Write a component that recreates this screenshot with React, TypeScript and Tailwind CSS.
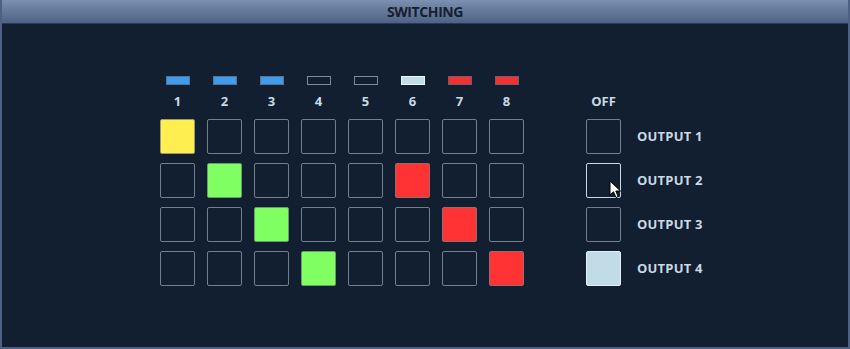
import React from "react"

type Bar = "blue" | "empty" | "light" | "red"

const bars: Bar[] = ["blue", "blue", "blue", "empty", "empty", "light", "red", "red"]

const colors: Record<number, string> = {
  0: "bg-[#ffee4f] border-[#9a9a70]",
  1: "bg-[#80ff62] border-[#6a9a70]",
  2: "bg-[#80ff62] border-[#6a9a70]",
  3: "bg-[#80ff62] border-[#6a9a70]",
  5: "bg-[#ff3333] border-[#9a6a70]",
  6: "bg-[#ff3333] border-[#9a6a70]",
  7: "bg-[#ff3333] border-[#9a6a70]",
}

// matrix[row][col] -> colour key of the lit crosspoint, null = unlit
const matrix: (number | null)[][] = [
  [0, null, null, null, null, null, null, null],
  [null, 1, null, null, null, 5, null, null],
  [null, null, 2, null, null, null, 6, null],
  [null, null, null, 3, null, null, null, 7],
]

function BarChip({ kind }: { kind: Bar }) {
  const cls =
    kind === "blue"
      ? "bg-[#3f9bec] border-[#5a7390]"
      : kind === "red"
      ? "bg-[#f23232] border-[#7a5a68]"
      : kind === "light"
      ? "bg-[#c2dde9] border-[#eef6fa]"
      : "bg-transparent border-[#7d8b99]"
  return <div className={`h-[9px] w-[24px] border ${cls}`} />
}

function Cell({ active }: { active: number | null }) {
  const cls = active !== null ? colors[active] : "border-[#737f8d]"
  return <div className={`h-[35px] w-[35px] rounded-[2px] border ${cls}`} />
}

function Cursor() {
  return (
    <svg className="absolute left-[22px] top-[16px]" width="13" height="19" viewBox="0 0 13 19">
      <path
        d="M1 1 L1 15 L4.5 11.8 L7 17.5 L9.2 16.6 L6.8 11 L11.5 11 Z"
        fill="#ffffff"
        stroke="#000000"
        strokeWidth="1"
        strokeLinejoin="miter"
      />
    </svg>
  )
}

export default function App() {
  return (
    <div
      className="flex h-[349px] w-[850px] flex-col border-x-2 border-b-2 border-[#4c6184]"
      style={{ fontFamily: '"Open Sans", "Liberation Sans", sans-serif' }}
    >
      <div className="flex h-[24px] items-center justify-center border-b border-[#2a3a54] bg-gradient-to-b from-[#7c90b1] to-[#4d6285]">
        <span className="text-[14px] font-bold leading-none tracking-[-0.4px] text-[#15202f]">
          SWITCHING
        </span>
      </div>

      <div className="flex flex-1 bg-[#111f30] pl-[158px] pt-[52px]">
        <div className="flex gap-[12px]">
          {bars.map((b, c) => (
            <div key={c} className="flex w-[35px] flex-col items-center">
              <BarChip kind={b} />
              <div className="mt-[8px] h-[16px] text-[13px] font-bold leading-[16px] text-[#c9d9e5]">
                {c + 1}
              </div>
              <div className="mt-[10px] flex flex-col gap-[9px]">
                {matrix.map((row, r) => (
                  <Cell key={r} active={row[c]} />
                ))}
              </div>
            </div>
          ))}
        </div>

        <div className="ml-[62px] flex flex-col">
          <div className="mt-[17px] flex h-[16px] w-[35px] justify-center text-[13px] font-bold leading-[16px] text-[#c9d9e5]">
            OFF
          </div>
          <div className="mt-[10px] flex flex-col gap-[9px]">
            {[1, 2, 3, 4].map((n) => (
              <div key={n} className="flex h-[35px] items-center gap-[16px]">
                <div
                  className={`relative h-[35px] w-[35px] rounded-[2px] border ${
                    n === 4
                      ? "border-[#e6f1f6] bg-[#c2dce7]"
                      : n === 2
                      ? "border-[#c9dae4]"
                      : "border-[#737f8d]"
                  }`}
                >
                  {n === 2 && <Cursor />}
                </div>
                <span className="text-[13px] font-bold tracking-[0.2px] text-[#c9d9e5]">
                  OUTPUT {n}
                </span>
              </div>
            ))}
          </div>
        </div>
      </div>
    </div>
  )
}
